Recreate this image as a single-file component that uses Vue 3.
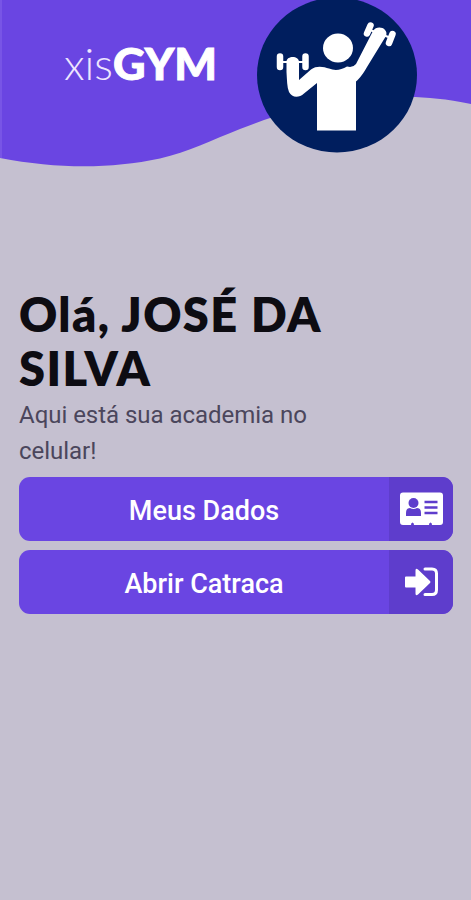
<template>
    <main class="app">
        <header class="hero">
            <svg class="hero-art" viewBox="0 0 471 180" aria-hidden="true">
                <path class="wave" d="M0 0H471V104C446 99 428 97 408 97C350 97 301 105 240 129C212 140 188 152 160 158.500C110 169 58 169 0 158Z" />
                <path class="edge" d="M0 0H2V158H0Z" />
                <ellipse class="badge" cx="337" cy="75" rx="80" ry="77.500" />
                <g class="athlete">
                    <ellipse cx="338" cy="48" rx="15" ry="14.500" />
                    <path d="M286.500 61.500C287 55.500 299 55.500 299 62V80L311 69.500C317 65 324 67 329 68.500C335 71 341 70 347 66.500Q353 68 356 64L373 31C377 24 389 28 386 36L367 67C363 74 360 78 356 81.500V130.500H317V83L304 93.500C299 98 292 98 289 92C287 87 287 80 286.500 72Z" />
                    <g class="dumbbell">
                        <path class="bar" d="M281 62H304M370 30L391 38" />
                        <path class="plate" d="M280 56.500V67M305.500 56.500V67M370.500 25.500L367 33.500M392.500 34L389 43" />
                    </g>
                </g>
                <text class="logo-light" x="64" y="79.500" textLength="49" lengthAdjust="spacingAndGlyphs">xis</text>
                <text class="logo-bold" x="113" y="79.500" textLength="104" lengthAdjust="spacingAndGlyphs">GYM</text>
            </svg>
        </header>

        <section class="content">
            <h1 class="greeting">Olá, {{ userName }}</h1>
            <p class="subtitle">Aqui está sua academia no celular!</p>

            <nav class="actions">
                <button v-for="action in actions" :key="action.id" type="button" class="action-btn">
                    <span class="action-label">{{ action.label }}</span>
                    <span class="action-icon">
                        <svg v-if="action.id === 'dados'" width="44" height="34" viewBox="0 0 44 34">
                            <path class="fill" d="M4 0.500H41Q44 0.500 44 3.500V30Q44 33 41 33H33Q33 30.500 31.500 30.500Q30 30.500 30 33H15Q15 30.500 13.500 30.500Q12 30.500 12 33H4Q1 33 1 30V3.500Q1 0.500 4 0.500Z" />
                            <circle class="detail" cx="14.500" cy="11" r="5" />
                            <path class="detail" d="M7 24V21Q7 16 11 16Q14.500 18 18 16Q22 16 22 21V24Z" />
                            <path class="lines" d="M25.500 10H38.500M25.500 15.500H38.500M25.500 21H38.500" />
                        </svg>
                        <svg v-else width="44" height="34" viewBox="0 0 44 34">
                            <path class="fill" d="M7 11.500Q6 11.500 6 12.500V21.500Q6 22.500 7 22.500H16.500V28.500Q16.500 31.500 19 29.500L31 18Q32 17 31 16L19 4.500Q16.500 2.500 16.500 5.500V11.500Z" />
                            <path class="door" d="M26 4H33Q37.500 4 37.500 8.500V25Q37.500 29.500 33 29.500H26" />
                        </svg>
                    </span>
                </button>
            </nav>
        </section>
    </main>
</template>

<script setup>
const userName = 'JOSÉ DA SILVA';

const actions = [
    { id: 'dados', label: 'Meus Dados' },
    { id: 'catraca', label: 'Abrir Catraca' }
];
</script>

<style>
body {
    margin: 0;
    background-color: #c5c0d0;
}
</style>

<style scoped>
.app {
    min-height: 900px;
    background-color: #c5c0d0;
    font-family: Roboto, "Liberation Sans", sans-serif;
}

.hero {
    height: 287px;
}

.hero-art {
    display: block;
    width: 471px;
    height: 180px;
}

.wave {
    fill: #6a45e2;
}

.edge {
    fill: #7855e6;
}

.badge {
    fill: #001e5e;
}

.athlete {
    fill: #fff;
}

.dumbbell {
    fill: none;
    stroke: #fff;
    stroke-linecap: round;
}

.bar {
    stroke-width: 2;
}

.plate {
    stroke-width: 6.500;
}

.logo-light,
.logo-bold {
    fill: #fff;
    font-family: Lato, sans-serif;
    font-size: 43px;
}

.logo-light {
    font-weight: 300;
    fill: #eee5ff;
}

.logo-bold {
    font-weight: 900;
    stroke: #fff;
    stroke-width: 0.900;
}

.content {
    padding: 0 18px 0 19px;
}

.greeting {
    width: 340px;
    margin: 0;
    font-family: Lato, "Noto Sans", sans-serif;
    font-size: 47px;
    font-weight: 800;
    line-height: 54px;
    letter-spacing: 1.400px;
    color: #0d0c12;
}

.subtitle {
    width: 310px;
    margin: 3px 0 0;
    font-size: 24px;
    font-weight: 400;
    line-height: 35.500px;
    letter-spacing: -0.030px;
    color: #4b465c;
}

.actions {
    display: flex;
    flex-direction: column;
    gap: 9px;
    margin-top: 8px;
}

.action-btn {
    display: flex;
    width: 100%;
    height: 64px;
    padding: 0;
    border: none;
    border-radius: 11px;
    overflow: hidden;
    background-color: #6a45e2;
    color: #fff;
    font-family: inherit;
    cursor: pointer;
}

.action-label {
    flex: 1;
    padding-top: 2px;
    font-size: 27px;
    font-weight: 500;
    line-height: 64px;
    white-space: nowrap;
}

.action-icon {
    display: flex;
    align-items: center;
    justify-content: center;
    width: 64px;
    height: 64px;
    background-color: #5e3dcc;
}

.fill {
    fill: #fff;
}

.detail {
    fill: #5e3dcc;
}

.lines {
    stroke: #5e3dcc;
    stroke-width: 2.500;
}

.door {
    fill: none;
    stroke: #fff;
    stroke-width: 3;
    stroke-linecap: round;
}
</style>
